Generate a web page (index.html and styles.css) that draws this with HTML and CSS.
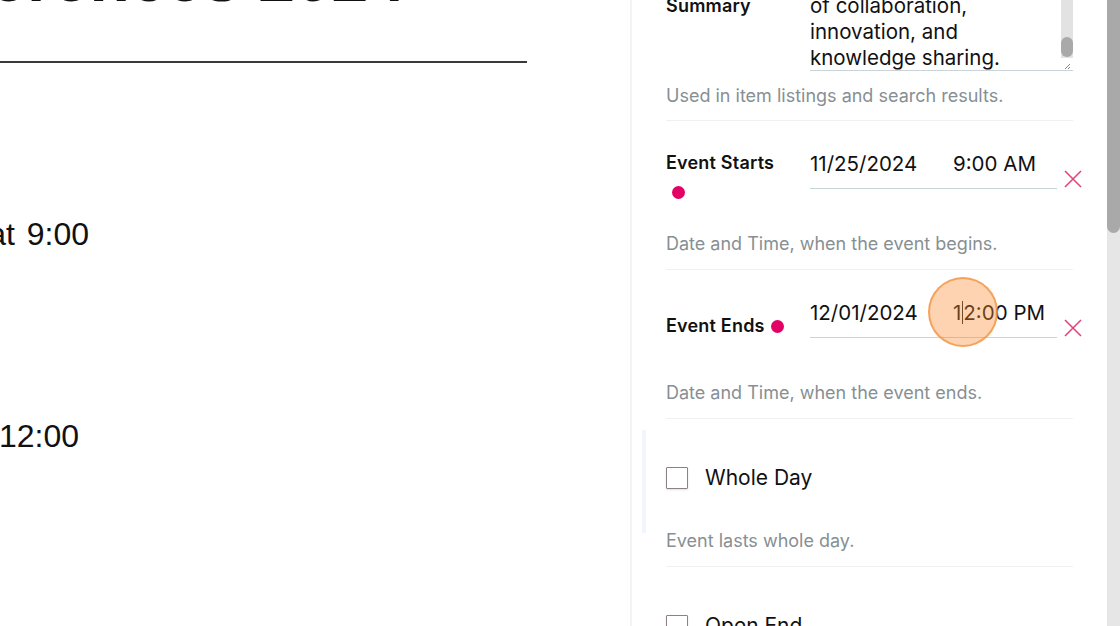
FILE: index.html
```html
<!DOCTYPE html>
<html lang="en">
<head>
<meta charset="utf-8">
<title>Edit Event</title>
<link rel="stylesheet" href="styles.css">
</head>
<body>
<div class="app">
  <main class="content">
    <div class="title-wrap"><h1 class="title">Conferences 2024</h1></div>
    <div class="rule"></div>
    <div class="line line-start"><p class="line-text">Starts at 9:00</p></div>
    <div class="line line-end"><p class="line-text">until 12:00</p></div>
  </main>

  <aside class="sidebar">
    <div class="field field-summary">
      <div class="row">
        <label class="label">Summary</label>
        <div class="textarea">
          <div class="ta-text">
            <span>together in a spirit</span>
            <span>of collaboration,</span>
            <span>innovation, and</span>
            <span>knowledge sharing.</span>
          </div>
          <div class="ta-scroll">
            <div class="ta-track"><div class="ta-thumb"></div></div>
            <div class="ta-grip">
              <svg width="8" height="8" viewBox="0 0 8 8"><path d="M7 2 L2 7 M7 5 L5 7" stroke="#888" stroke-width="1" fill="none"/></svg>
            </div>
          </div>
        </div>
      </div>
      <p class="help help-summary">Used in item listings and search results.</p>
    </div>

    <div class="field">
      <div class="row">
        <label class="label label-narrow">Event Starts <span class="req"></span></label>
        <div class="date-input">
          <div class="dt-box">
            <span class="dt-date">11/25/2024</span>
            <span class="dt-time">9:00 AM</span>
          </div>
          <button class="clear" aria-label="Clear">
            <svg width="20" height="20" viewBox="0 0 20 20"><path d="M2 2 L18 18 M18 2 L2 18" stroke="#e0457e" stroke-width="1.6" fill="none"/></svg>
          </button>
        </div>
      </div>
      <p class="help">Date and Time, when the event begins.</p>
    </div>

    <div class="field">
      <div class="row">
        <label class="label">Event Ends <span class="req"></span></label>
        <div class="date-input">
          <div class="dt-box">
            <span class="dt-date">12/01/2024</span>
            <span class="dt-time">1<span class="caret"></span>2:00 PM</span>
            <span class="click-marker"></span>
          </div>
          <button class="clear" aria-label="Clear">
            <svg width="20" height="20" viewBox="0 0 20 20"><path d="M2 2 L18 18 M18 2 L2 18" stroke="#e0457e" stroke-width="1.6" fill="none"/></svg>
          </button>
        </div>
      </div>
      <p class="help">Date and Time, when the event ends.</p>
    </div>

    <div class="field field-check field-focus">
      <div class="row check-row">
        <span class="checkbox"></span>
        <span class="check-label">Whole Day</span>
      </div>
      <p class="help help-check">Event lasts whole day.</p>
    </div>

    <div class="field field-check">
      <div class="row check-row">
        <span class="checkbox"></span>
        <span class="check-label">Open End</span>
      </div>
      <p class="help help-check">Event has no end date.</p>
    </div>
  </aside>

  <div class="page-scroll"><div class="page-thumb"></div></div>
</div>
</body>
</html>
```

FILE: styles.css
```css
* { box-sizing: border-box; }
html, body { margin: 0; padding: 0; background: #fff; }
body { width: 1120px; height: 626px; overflow: hidden; }

.app {
  display: flex;
  width: 1120px;
  height: 626px;
  overflow: hidden;
}

/* ---------- left content ---------- */
.content {
  width: 630px;
  flex: none;
  font-family: "Liberation Sans", Arial, sans-serif;
  color: #111;
  overflow: hidden;
}
.title-wrap {
  display: flex;
  justify-content: flex-end;
  width: 405px;
  height: 4px;
  overflow: visible;
}
.title {
  margin: -50px 0 0 0;
  font-size: 66px;
  line-height: 56px;
  font-weight: 700;
  white-space: nowrap;
  flex: none;
}
.rule {
  width: 527px;
  height: 2px;
  background: #3a3a3a;
  margin-top: 57px;
}
.line {
  display: flex;
  justify-content: flex-end;
  overflow: visible;
}
.line-text {
  margin: 0;
  flex: none;
  white-space: nowrap;
  font-size: 32px;
  line-height: 40px;
  word-spacing: 3px;
}
.line-start { width: 89px; margin-top: 151px; }
.line-end { width: 79px; margin-top: 162px; }

/* ---------- sidebar ---------- */
.sidebar {
  width: 477px;
  flex: none;
  border-left: 2px solid #f2f3f3;
  padding: 0 34px;
  font-family: "Inter", "Open Sans", sans-serif;
  color: #111;
  position: relative;
}
.field {
  padding-top: 28px;
  padding-bottom: 15px;
  border-bottom: 1px solid #edf1f2;
  position: relative;
}
.row {
  display: flex;
  align-items: center;
}
.label {
  width: 144px;
  flex: none;
  font-size: 18px;
  font-weight: 600;
  line-height: 27px;
  letter-spacing: 0.2px;
}
.label-narrow { padding-right: 30px; }
.req {
  display: inline-block;
  width: 13px;
  height: 13px;
  border-radius: 50%;
  background: #e40166;
  margin-left: 2px;
  vertical-align: -1px;
}
.label-narrow .req { margin-left: 6px; vertical-align: -3px; }

.help {
  margin: 31px 0 0 0;
  font-size: 18px;
  line-height: 20px;
  color: #878f93;
}

/* summary */
.field-summary {
  padding-top: 0;
  padding-bottom: 14px;
  margin-top: -60px;
}
.textarea {
  width: 263px;
  height: 131px;
  border-bottom: 1px solid #c7d5d8;
  display: flex;
}
.ta-text {
  flex: 1;
  display: flex;
  flex-direction: column;
  justify-content: flex-start;
  padding-top: 27px;
  overflow: hidden;
  font-size: 20.5px;
  line-height: 26px;
}
.ta-text span { display: block; white-space: nowrap; }
.ta-scroll {
  width: 12px;
  display: flex;
  flex-direction: column;
}
.ta-track {
  flex: 1;
  background: #e2e2e2;
  padding-top: 97px;
}
.ta-thumb {
  width: 12px;
  height: 20px;
  border-radius: 6px;
  background: #a9a9a9;
}
.ta-grip {
  height: 12px;
  background: #fff;
  display: flex;
  align-items: flex-end;
  justify-content: center;
}
.help-summary { margin-top: 15px; }

/* date inputs */
.date-input {
  flex: 1;
  display: flex;
  align-items: flex-start;
  height: 54px;
}
.dt-box {
  width: 247px;
  height: 40px;
  padding-top: 1px;
  border-bottom: 1px solid #c7d5d8;
  display: flex;
  font-size: 20.5px;
  line-height: 28px;
  position: relative;
}
.dt-date { width: 143px; }
.dt-time { position: relative; }
.caret {
  display: inline-block;
  width: 1px;
  height: 23px;
  background: #222;
  vertical-align: -4px;
  margin: 0 0 0 1px;
}
.clear {
  border: 0;
  background: transparent;
  padding: 0;
  margin: 20px 0 0 6px;
  width: 20px;
  height: 20px;
  display: flex;
}
.click-marker {
  position: absolute;
  left: 118px;
  top: -21px;
  width: 70px;
  height: 70px;
  border-radius: 50%;
  background: rgba(250, 140, 50, 0.38);
  border: 2px solid rgba(243, 150, 70, 0.8);
}

/* checkboxes */
.field-check { padding-top: 32px; }
.check-row { height: 54px; }
.checkbox {
  width: 22px;
  height: 22px;
  border: 1px solid #8d8182;
  border-radius: 1px;
  box-shadow: 0 1px 2px rgba(0,0,0,0.12);
  flex: none;
}
.check-label {
  margin-left: 17px;
  font-size: 21px;
  line-height: 26px;
}
.help-check { margin-top: 26px; }
.field-focus::before {
  content: "";
  position: absolute;
  left: -24px;
  top: 11px;
  width: 4px;
  height: 103px;
  background: #f0f6fc;
}

/* page scrollbar */
.page-scroll {
  width: 13px;
  flex: none;
  background: #e6e6e6;
}
.page-thumb {
  height: 233px;
  background: #a9a9a9;
  border-radius: 0 0 7px 7px;
}
```
